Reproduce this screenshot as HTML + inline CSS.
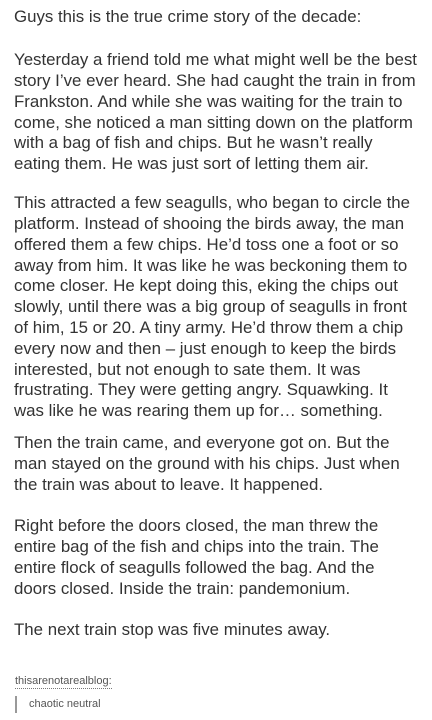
<!DOCTYPE html>
<html><head><meta charset="utf-8"><style>
html,body{margin:0;padding:0;background:#fff;width:432px;height:720px;overflow:hidden}
body{font-family:"Liberation Sans",Arial,sans-serif;color:#333;position:relative}
.l{position:absolute;left:14px;font-size:16.85px;white-space:nowrap;line-height:20px}
.b{position:absolute;left:15px;top:675px;font-size:11px;color:#555;border-bottom:1px dotted #777;line-height:13px}
.q{position:absolute;left:29px;top:697px;font-size:11px;color:#555;line-height:14px}
.bar{position:absolute;left:15px;top:696px;width:2px;height:17px;background:#999}
</style></head><body>
<div class="l" style="top:7px">Guys this is the true crime story of the decade:</div>

<div class="l" style="top:50px">Yesterday a friend told me what might well be the best</div>
<div class="l" style="top:71px">story I’ve ever heard. She had caught the train in from</div>
<div class="l" style="top:92px">Frankston. And while she was waiting for the train to</div>
<div class="l" style="top:113px">come, she noticed a man sitting down on the platform</div>
<div class="l" style="top:133px">with a bag of fish and chips. But he wasn’t really</div>
<div class="l" style="top:154px">eating them. He was just sort of letting them air.</div>

<div class="l" style="top:193px">This attracted a few seagulls, who began to circle the</div>
<div class="l" style="top:214px">platform. Instead of shooing the birds away, the man</div>
<div class="l" style="top:235px">offered them a few chips. He’d toss one a foot or so</div>
<div class="l" style="top:256px">away from him. It was like he was beckoning them to</div>
<div class="l" style="top:276px">come closer. He kept doing this, eking the chips out</div>
<div class="l" style="top:297px">slowly, until there was a big group of seagulls in front</div>
<div class="l" style="top:318px">of him, 15 or 20. A tiny army. He’d throw them a chip</div>
<div class="l" style="top:339px">every now and then – just enough to keep the birds</div>
<div class="l" style="top:360px">interested, but not enough to sate them. It was</div>
<div class="l" style="top:380px">frustrating. They were getting angry. Squawking. It</div>
<div class="l" style="top:401px">was like he was rearing them up for… something.</div>

<div class="l" style="top:433px">Then the train came, and everyone got on. But the</div>
<div class="l" style="top:454px">man stayed on the ground with his chips. Just when</div>
<div class="l" style="top:475px">the train was about to leave. It happened.</div>

<div class="l" style="top:516px">Right before the doors closed, the man threw the</div>
<div class="l" style="top:537px">entire bag of the fish and chips into the train. The</div>
<div class="l" style="top:558px">entire flock of seagulls followed the bag. And the</div>
<div class="l" style="top:579px">doors closed. Inside the train: pandemonium.</div>

<div class="l" style="top:620px">The next train stop was five minutes away.</div>

<div class="b">thisarenotarealblog:</div>
<div class="bar"></div>
<div class="q">chaotic neutral</div>
</body></html>
